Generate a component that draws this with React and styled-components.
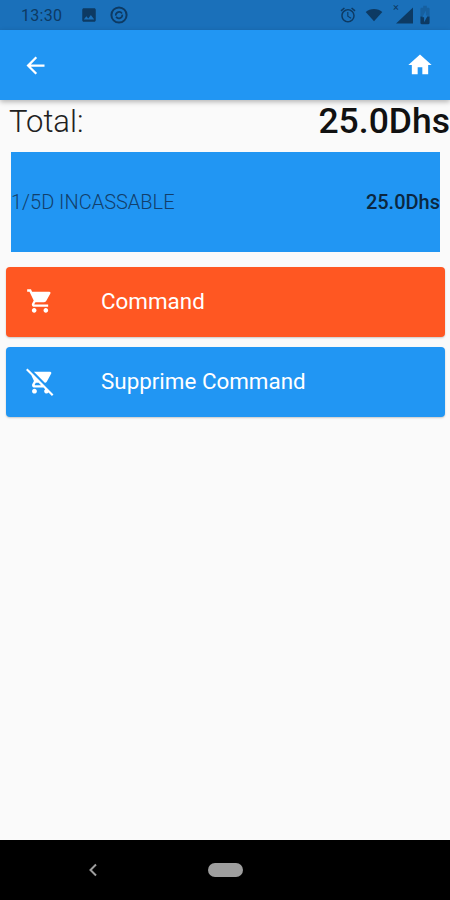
import React from 'react'
import styled, { createGlobalStyle } from 'styled-components'
import {
  MdArrowBack,
  MdHome,
  MdShoppingCart,
  MdRemoveShoppingCart,
  MdPhoto,
  MdAlarm,
  MdBatteryCharging50,
} from 'react-icons/md'

const GlobalStyle = createGlobalStyle`
  html, body {
    margin: 0;
    padding: 0;
    background: #fafafa;
    font-family: Roboto, "Liberation Sans", sans-serif;
  }
`

export default function App() {
  return (
    <Screen>
      <GlobalStyle />
      <StatusBar>
        <StatusGroup>
          <Clock>13:30</Clock>
          <MdPhoto size={18} />
          <svg width="20" height="20" viewBox="0 0 20 20" fill="none" stroke="currentColor" strokeWidth="2">
            <circle cx="10" cy="10" r="7.6" />
            <path d="M6.8 10.6a3.4 3.4 0 0 1 6.2-2.2M13.3 9.6a3.4 3.4 0 0 1-6.2 2.2" strokeWidth="1.7" />
          </svg>
        </StatusGroup>
        <StatusGroup $gap={8}>
          <MdAlarm size={18} />
          <svg width="18" height="14" viewBox="0 0 20 16">
            <path d="M10 15 0.5 4.6C3 2.4 6.3 1 10 1s7 1.4 9.5 3.6z" fill="currentColor" />
          </svg>
          <SignalWrap>
            <NoData>×</NoData>
            <svg width="17" height="17" viewBox="0 0 18 17">
              <path d="M0 17 18 0v17z" fill="currentColor" />
            </svg>
          </SignalWrap>
          <MdBatteryCharging50 size={22} />
        </StatusGroup>
      </StatusBar>

      <AppBar>
        <MdArrowBack size={27} />
        <MdHome size={28} />
      </AppBar>

      <Content>
        <TotalRow>
          <TotalLabel>Total:</TotalLabel>
          <TotalValue>25.0Dhs</TotalValue>
        </TotalRow>

        <OrderItem>
          <ItemName>1/5D INCASSABLE</ItemName>
          <ItemPrice>25.0Dhs</ItemPrice>
        </OrderItem>

        <ActionButton $color="#ff5722">
          <ActionIcon><MdShoppingCart size={28} /></ActionIcon>
          Command
        </ActionButton>
        <ActionButton $color="#2196f3">
          <ActionIcon><MdRemoveShoppingCart size={29} /></ActionIcon>
          Supprime Command
        </ActionButton>
      </Content>

      <NavBar>
        <svg width="10" height="14" viewBox="0 0 10 14" fill="none" stroke="#9e9e9e" strokeWidth="2">
          <path d="M8 1.5 2.5 7 8 12.5" />
        </svg>
        <HomePill />
      </NavBar>
    </Screen>
  )
}

const Screen = styled.div`
  width: 450px;
  height: 900px;
  display: flex;
  flex-direction: column;
  overflow: hidden;
  background: #fafafa;
`

const StatusBar = styled.div`
  height: 30px;
  flex: none;
  display: flex;
  align-items: center;
  justify-content: space-between;
  padding: 0 14px 0 21px;
  background: #1a70ba;
  color: #0d3a63;
`

const StatusGroup = styled.div`
  display: flex;
  align-items: center;
  gap: ${props => props.$gap || 11}px;
`

const Clock = styled.span`
  font-size: 16px;
  letter-spacing: 0.3px;
  margin-right: 7px;
`

const SignalWrap = styled.div`
  position: relative;
  display: flex;
  align-items: flex-end;
  height: 18px;
  margin: 0 -7px 0 5px;
`

const NoData = styled.span`
  position: absolute;
  top: -4px;
  left: -3px;
  font-size: 11px;
  line-height: 12px;
`

const AppBar = styled.header`
  height: 70px;
  flex: none;
  display: flex;
  align-items: center;
  justify-content: space-between;
  padding: 0 16px 0 22px;
  background: #2196f3;
  color: #fff;
  box-shadow: 0 2px 5px rgba(0, 0, 0, 0.28);
  position: relative;
`

const Content = styled.main`
  flex: 1;
  display: flex;
  flex-direction: column;
`

const TotalRow = styled.div`
  height: 42px;
  display: flex;
  align-items: center;
  justify-content: space-between;
  padding-left: 9px;
`

const TotalLabel = styled.span`
  font-size: 31px;
  font-weight: 300;
  color: #212121;
`

const TotalValue = styled.span`
  font-size: 35.5px;
  font-weight: 500;
  color: #111;
`

const OrderItem = styled.div`
  height: 100px;
  margin: 10px 10px 15px 11px;
  display: flex;
  align-items: center;
  justify-content: space-between;
  background: #2196f3;
`

const ItemName = styled.span`
  font-size: 20px;
  font-weight: 300;
  color: #123f6b;
`

const ItemPrice = styled.span`
  font-size: 20px;
  font-weight: 500;
  color: #0b2740;
`

const ActionButton = styled.button`
  height: 70px;
  margin: 0 5px 10px 6px;
  padding: 0 0 2px;
  display: flex;
  align-items: center;
  border: none;
  border-radius: 4px;
  background: ${props => props.$color};
  color: #fff;
  font-family: inherit;
  font-size: 22.4px;
  text-align: left;
  box-shadow: 0 1px 2px rgba(0, 0, 0, 0.2);
`

const ActionIcon = styled.span`
  width: 95px;
  padding-left: 20px;
  box-sizing: border-box;
  display: flex;
  flex: none;
`

const NavBar = styled.nav`
  height: 60px;
  flex: none;
  position: relative;
  display: flex;
  align-items: center;
  padding-left: 88px;
  gap: 110px;
  background: #000;
`

const HomePill = styled.div`
  width: 35px;
  height: 14px;
  border-radius: 7px;
  background: #9e9e9e;
`
